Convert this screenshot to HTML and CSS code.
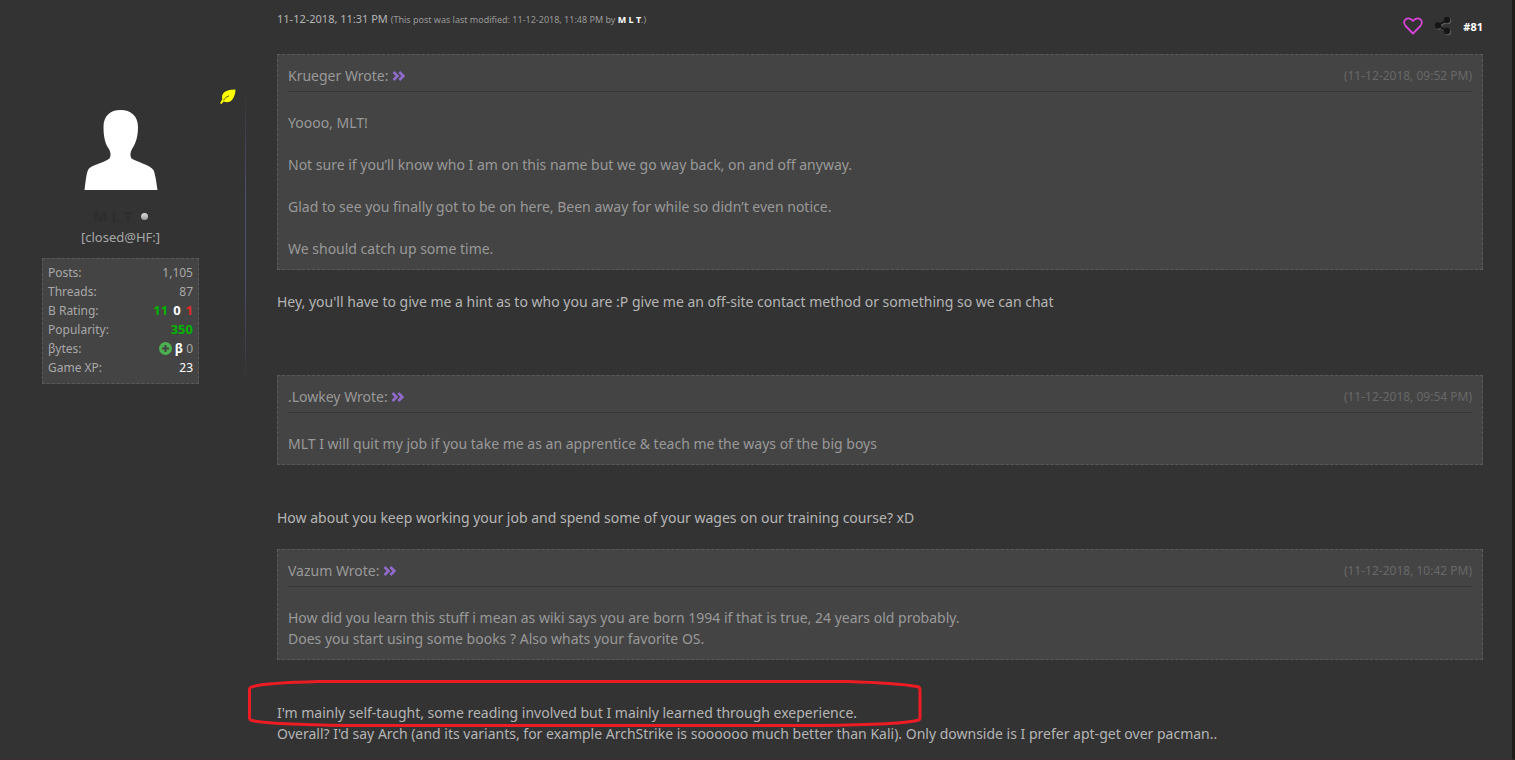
FILE: index.html
```
<!DOCTYPE html>
<html lang="en">
<head>
    <meta charset="UTF-8">
    <meta name="viewport" content="width=device-width, initial-scale=1.0">
    <title>Thread - Post #81</title>
    <link rel="stylesheet" href="styles.css">
</head>
<body>
    <!-- shared icon -->
    <svg class="sprite" aria-hidden="true">
        <symbol id="jump" viewBox="0 0 13 10">
            <path d="M1.500 1l4 4-4 4M7.300 1l4 4-4 4" fill="none" stroke="#8f6bcb" stroke-width="2.600"/>
        </symbol>
    </svg>

    <article class="post">
        <aside class="author">
            <svg class="leaf" viewBox="0 0 16 16" role="img" aria-label="Leaf">
                <path d="M15.400.5C12 .8 7 .7 3.800 3.800C2 5.600 1.700 8 2.300 10.200L.4 13.600C0 14.600 1.300 15.500 2 14.500L3.600 12.400C7 14 10.500 13.300 12.600 10.200C14.500 7.400 15.600 4 15.400.5Z" fill="#ff0"/>
                <path d="M3.500 11.200C4.800 9.200 6.500 7.800 9 6.800" fill="none" stroke="#555500" stroke-width="1"/>
            </svg>
            <svg class="avatar" viewBox="0 0 74 80" role="img" aria-label="Avatar">
                <path d="M36.500 0C26 0 19.500 6 19.500 17C19.500 26 21 34 25 39C27 43 27 46 25.500 48.500C20 53 7 54.500 4 60C2 65 1.500 73 .5 80H73.500C72.500 73 71.500 65 69.500 60C66 55 53 52 47.500 48.500C46 46 46 43 48 39C52 33 54 26 54 17C54 6 47 0 36.500 0Z" fill="#fff"/>
            </svg>
            <div class="username"><a href="#">M L T</a> <span class="status"></span></div>
            <div class="usertitle">[closed@HF:]</div>
            <dl class="stats">
                <div><dt>Posts:</dt><dd>1,105</dd></div>
                <div><dt>Threads:</dt><dd>87</dd></div>
                <div><dt>B Rating:</dt><dd class="rating"><b class="good">11</b> <b class="white">0</b> <b class="bad">1</b></dd></div>
                <div><dt>Popularity:</dt><dd><b class="good">350</b></dd></div>
                <div>
                    <dt>βytes:</dt>
                    <dd>
                        <svg class="plus" viewBox="0 0 12 12" aria-hidden="true">
                            <circle cx="6" cy="6" r="6" fill="#4caf50"/>
                            <path d="M6 2.800V9.200M2.800 6H9.200" stroke="#444" stroke-width="1.900"/>
                        </svg>
                        <b class="white">β</b> 0
                    </dd>
                </div>
                <div><dt>Game XP:</dt><dd class="white">23</dd></div>
            </dl>
        </aside>

        <div class="content">
            <header class="post-head">
                <div class="post-date">11-12-2018, 11:31 PM <small>(This post was last modified: 11-12-2018, 11:48 PM by <a href="#">M L T</a>.)</small></div>
                <div class="post-tools">
                    <button type="button" aria-label="Like">
                        <svg width="20" height="18" viewBox="0 0 20 18">
                            <path d="M10 16.500L2.600 9C.6 6.800.7 3.800 2.700 2.200C4.900.8 8.200 1.200 10 4C11.800 1.200 15.100.8 17.300 2.200C19.300 3.800 19.400 6.800 17.400 9Z" fill="none" stroke="#d744d7" stroke-width="1.800" stroke-linejoin="round"/>
                        </svg>
                    </button>
                    <button type="button" aria-label="Share">
                        <svg width="20" height="20" viewBox="0 0 20 20">
                            <g fill="#606060" stroke="#606060" transform="translate(1 1)">
                                <path d="M14 4L5 9.500L14 15" fill="none" stroke-width="2"/>
                                <circle cx="14" cy="4" r="2.800"/><circle cx="5" cy="9.500" r="2.800"/><circle cx="14" cy="15" r="2.800"/>
                            </g>
                            <g fill="#151515" stroke="#151515">
                                <path d="M14 4L5 9.500L14 15" fill="none" stroke-width="2"/>
                                <circle cx="14" cy="4" r="2.800"/><circle cx="5" cy="9.500" r="2.800"/><circle cx="14" cy="15" r="2.800"/>
                            </g>
                        </svg>
                    </button>
                    <a href="#">#81</a>
                </div>
            </header>

            <blockquote class="quote">
                <div class="quote-head">
                    <cite>Krueger Wrote: <a href="#" aria-label="Go to post"><svg><use href="#jump"/></svg></a></cite>
                    <time>(11-12-2018, 09:52 PM)</time>
                </div>
                <p>Yoooo, MLT!</p>
                <p>Not sure if you’ll know who I am on this name but we go way back, on and off anyway.</p>
                <p>Glad to see you finally got to be on here, Been away for while so didn’t even notice.</p>
                <p>We should catch up some time.</p>
            </blockquote>

            <p class="reply first">Hey, you'll have to give me a hint as to who you are :P give me an off-site contact method or something so we can chat</p>

            <blockquote class="quote">
                <div class="quote-head">
                    <cite>.Lowkey Wrote: <a href="#" aria-label="Go to post"><svg><use href="#jump"/></svg></a></cite>
                    <time>(11-12-2018, 09:54 PM)</time>
                </div>
                <p>MLT I will quit my job if you take me as an apprentice &amp; teach me the ways of the big boys</p>
            </blockquote>

            <p class="reply">How about you keep working your job and spend some of your wages on our training course? xD</p>

            <blockquote class="quote">
                <div class="quote-head">
                    <cite>Vazum Wrote: <a href="#" aria-label="Go to post"><svg><use href="#jump"/></svg></a></cite>
                    <time>(11-12-2018, 10:42 PM)</time>
                </div>
                <p>How did you learn this stuff i mean as wiki says you are born 1994 if that is true, 24 years old probably.<br>
                Does you start using some books ? Also whats your favorite OS.</p>
            </blockquote>

            <p class="reply last">
                I'm mainly self-taught, some reading involved but I mainly learned through exeperience.<br>
                Overall? I'd say Arch (and its variants, for example ArchStrike is soooooo much better than Kali). Only downside is I prefer apt-get over pacman..
                <svg class="marker" viewBox="0 0 676 48" aria-hidden="true">
                    <path d="M72 2.500H600Q650 4 670 7.500Q673 8 673 11V39Q673 41 670 41.500Q650 46 560 46.500H100Q20 45 5 41.500Q2.500 41 2.500 39V10Q3 8 8 7Q20 4 72 2.500Z" fill="none" stroke="#ed1c24" stroke-width="3" stroke-linejoin="round"/>
                </svg>
            </p>
        </div>
    </article>
</body>
</html>
```
FILE: styles.css
```
* {
    box-sizing: border-box;
}

body {
    margin: 0;
    background-color: #333;
    color: #b5b5b5;
    font-family: "Noto Sans", "Segoe UI", sans-serif;
    font-size: 14px;
    line-height: 21px;
}

a {
    color: #fff;
    text-decoration: none;
}

p {
    margin: 0;
}

.sprite {
    display: none;
}

.post {
    display: flex;
    min-height: 100vh;
    padding-right: 29px;
    border-right: 3px solid #1e1d1a;
    border-bottom: 1px solid #3b3033;
}

/* Left column */
.author {
    display: flex;
    flex-direction: column;
    align-items: center;
    align-self: flex-start;
    flex: 0 0 246px;
    margin-top: 89px;
    padding: 0 46px 2px 42px;
    border-right: 1px solid;
    border-image: linear-gradient(#333, #4c5170 35%, #4c5170 65%, #333) 1;
}

.leaf {
    align-self: flex-end;
    width: 16px;
    height: 16px;
    margin-right: -37px;
}

.avatar {
    width: 74px;
    height: 80px;
    margin-top: 5px;
}

.username {
    display: flex;
    align-items: center;
    gap: 8px;
    margin-top: 16px;
    font-size: 15px;
    font-weight: bold;
}

.username a {
    color: #2d2d2d;
}

.status {
    width: 7px;
    height: 7px;
    border-radius: 50%;
    background: linear-gradient(#ddd, #999);
}

.usertitle {
    color: #a8a8a8;
    font-size: 13px;
}

.stats {
    width: 100%;
    margin: 10px 0 0;
    padding: 4px 5px 6px;
    border: 1px dashed #5a5a5a;
    background-color: #444;
    color: #a8a8a8;
    font-size: 12px;
    line-height: 19px;
}

.stats div {
    display: flex;
    justify-content: space-between;
    height: 19px;
}

.stats dd {
    margin: 0;
}

.stats b {
    font-size: 13px;
}

.rating {
    display: flex;
    gap: 5px;
}

.plus {
    width: 13px;
    height: 13px;
    vertical-align: -2px;
}

.good {
    color: #00b400;
}

.bad {
    color: #e12a2a;
}

.white {
    color: #fff;
}

/* Post */
.content {
    flex: 1;
    min-width: 0;
    padding-left: 31px;
}

.post-head {
    display: flex;
    justify-content: space-between;
    height: 54px;
    padding-top: 8px;
    font-size: 11px;
}

.post-date small {
    color: #999;
    font-size: 9px;
}

.post-date a {
    font-weight: bold;
}

.post-tools {
    display: flex;
    align-items: center;
    gap: 10px;
    height: 36px;
    font-weight: bold;
}

.post-tools button {
    display: flex;
    padding: 0;
    border: none;
    background: none;
    cursor: pointer;
}

.quote {
    margin: 0;
    padding: 10px;
    border: 1px dashed #5a5a5a;
    background-color: #444;
    color: #999;
}

.quote-head {
    display: flex;
    justify-content: space-between;
    margin-bottom: 20px;
    padding-bottom: 5px;
    border-bottom: 1px solid #383838;
}

.quote cite {
    font-style: normal;
}

.quote cite svg {
    width: 13px;
    height: 10px;
}

.quote time {
    color: #686868;
    font-size: 12px;
}

.quote p + p {
    margin-top: 21px;
}

.reply {
    margin: 42px 0 21px;
}

.reply.first {
    margin: 21px 0 63px;
}

.reply.last {
    position: relative;
    margin-bottom: 15px;
}

/* hand-drawn mark over the first line */
.marker {
    position: absolute;
    top: -23px;
    left: -30px;
    width: 676px;
    height: 48px;
    pointer-events: none;
}
```
